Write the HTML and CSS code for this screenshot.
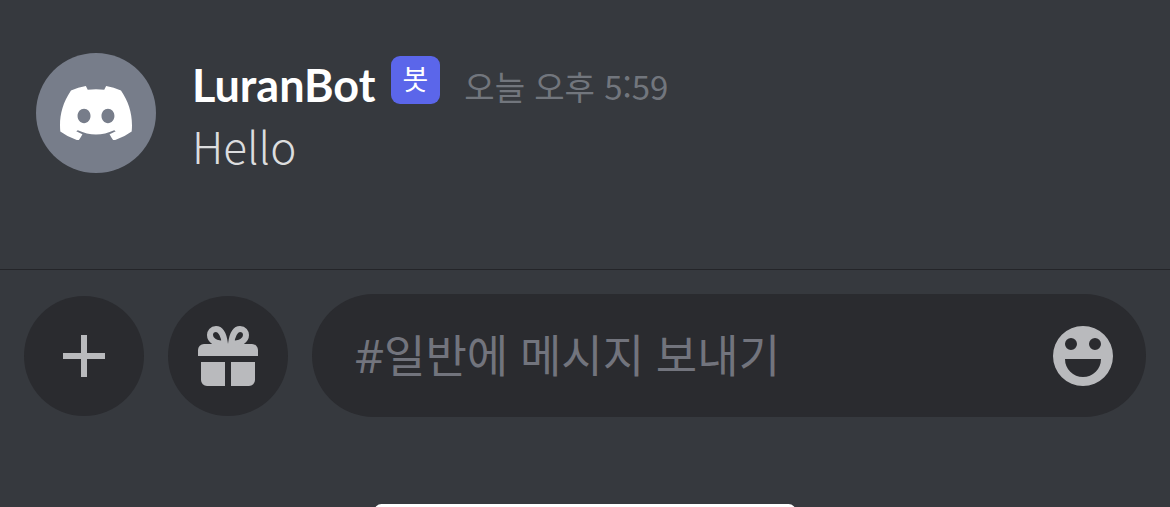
FILE: index.html
```html
<!DOCTYPE html>
<html lang="ko">
<head>
<meta charset="utf-8">
<meta name="viewport" content="width=device-width, initial-scale=1">
<title>#일반</title>
<link rel="stylesheet" href="styles.css">
</head>
<body>
<main class="chat">
  <section class="messages">
    <article class="message">
      <div class="avatar">
        <svg class="avatar-logo" viewBox="0 0 127.14 96.36" aria-hidden="true"><path fill="currentColor" d="M107.7,8.07A105.15,105.15,0,0,0,81.47,0a72.06,72.06,0,0,0-3.36,6.83A97.68,97.68,0,0,0,49,6.83,72.37,72.37,0,0,0,45.64,0,105.89,105.89,0,0,0,19.39,8.09C2.79,32.65-1.71,56.6.54,80.21h0A105.73,105.73,0,0,0,32.71,96.36,77.7,77.7,0,0,0,39.6,85.25a68.42,68.42,0,0,1-10.85-5.18c.91-.66,1.8-1.34,2.66-2a75.57,75.57,0,0,0,64.32,0c.87.71,1.76,1.39,2.66,2a68.68,68.68,0,0,1-10.87,5.19,77,77,0,0,0,6.89,11.1A105.25,105.25,0,0,0,126.6,80.22h0C129.24,52.84,122.09,29.11,107.7,8.07ZM42.45,65.69C36.18,65.69,31,60,31,53s5-12.74,11.43-12.74S54,46,53.89,53,48.84,65.69,42.45,65.69Zm42.24,0C78.41,65.69,73.25,60,73.25,53s5-12.74,11.44-12.74S96.23,46,96.12,53,91.08,65.69,84.69,65.69Z"/></svg>
      </div>
      <div class="message-body">
        <header class="message-header">
          <span class="author">LuranBot</span>
          <span class="badge">봇</span>
          <time class="time">오늘 오후 5:59</time>
        </header>
        <p class="text">Hello</p>
      </div>
    </article>
  </section>
  <form class="composer">
    <button class="round-button" type="button" aria-label="추가">
      <svg class="icon" viewBox="0 0 60 60" aria-hidden="true"><path fill="currentColor" d="M27 9h6v18h18v6H33v18h-6V33H9v-6h18z"/></svg>
    </button>
    <button class="round-button" type="button" aria-label="선물">
      <svg class="icon" viewBox="0 0 60 60" aria-hidden="true">
        <path fill="currentColor" d="M6 18h48a6 6 0 0 1 6 6v6H0v-6a6 6 0 0 1 6-6zM3 36h24v24H9a6 6 0 0 1-6-6zM33 36h24v18a6 6 0 0 1-6 6H33z"/>
        <path fill="none" stroke="currentColor" stroke-width="6" d="M27 18C26 10 23 3 18 3C14 3 12 6 12 9C12 14 17 18 27 18ZM33 18C34 10 37 3 42 3C46 3 48 6 48 9C48 14 43 18 33 18Z"/>
      </svg>
    </button>
    <div class="field">
      <input class="field-input" type="text" aria-label="메시지" placeholder="#일반에 메시지 보내기">
      <button class="emoji-button" type="button" aria-label="이모티콘">
        <svg class="icon" viewBox="0 0 60 60" aria-hidden="true"><path fill="currentColor" fill-rule="evenodd" d="M30 0a30 30 0 1 0 0 60a30 30 0 1 0 0-60zM18 12a6 6 0 1 1 0 12a6 6 0 1 1 0-12zM42 12a6 6 0 1 1 0 12a6 6 0 1 1 0-12zM12 33h36a18 18 0 0 1-36 0z"/></svg>
      </button>
    </div>
  </form>
  <div class="home-area"><div class="home-indicator"></div></div>
</main>
</body>
</html>
```
FILE: styles.css
```css
* {
  box-sizing: border-box;
}

body {
  margin: 0;
  background: #36393e;
  color: #dcddde;
  font-family: "Noto Sans CJK KR", sans-serif;
}

.chat {
  display: flex;
  flex-direction: column;
  min-height: 100vh;
}

.messages {
  padding: 53px 36px 96px;
}

.message {
  display: flex;
  gap: 36px;
}

.avatar {
  display: flex;
  flex: none;
  align-items: center;
  justify-content: center;
  width: 120px;
  height: 120px;
  border-radius: 50%;
  background: #777d8a;
  color: #fff;
}

.avatar-logo {
  width: 72px;
}

.message-header {
  display: flex;
  align-items: center;
  height: 64px;
}

.author {
  color: #fff;
  font-family: Lato, "Noto Sans CJK KR", sans-serif;
  font-size: 45px;
  font-weight: 700;
  line-height: 64px;
}

.badge {
  align-self: flex-start;
  height: 48px;
  margin: 3px 24px 0 15px;
  padding: 0 12px;
  border-radius: 9px;
  background: #5b66ea;
  color: #fff;
  font-size: 28px;
  line-height: 44px;
}

.time {
  padding-top: 2px;
  color: #72767d;
  font-size: 33px;
  line-height: 64px;
}

.text {
  margin: 0;
  font-size: 44px;
  font-weight: 300;
  line-height: 56px;
}

.composer {
  display: flex;
  align-items: center;
  gap: 24px;
  padding: 24px;
  border-top: 1px solid #242529;
}

.round-button,
.emoji-button {
  display: flex;
  flex: none;
  align-items: center;
  justify-content: center;
  padding: 0;
  border: 0;
  background: none;
  color: #b9babd;
}

.round-button {
  width: 120px;
  height: 120px;
  border-radius: 50%;
  background: #2a2b2f;
}

.icon {
  width: 60px;
  height: 60px;
}

.field {
  display: flex;
  flex: 1;
  align-items: center;
  min-width: 0;
  height: 123px;
  padding: 0 33px 0 43px;
  border-radius: 62px;
  background: #2a2b2f;
}

.field-input {
  flex: 1;
  min-width: 0;
  height: 80px;
  padding: 0;
  border: 0;
  outline: 0;
  background: none;
  color: #dcddde;
  font: 400 45px "Open Sans", "Noto Sans CJK KR", sans-serif;
}

.field-input::placeholder {
  color: #72747d;
  opacity: 1;
}

.home-area {
  height: 3px;
  margin-top: auto;
  overflow: hidden;
}

.home-indicator {
  width: 36%;
  height: 15px;
  margin: 0 auto;
  border-radius: 12px;
  background: #fff;
}
```
